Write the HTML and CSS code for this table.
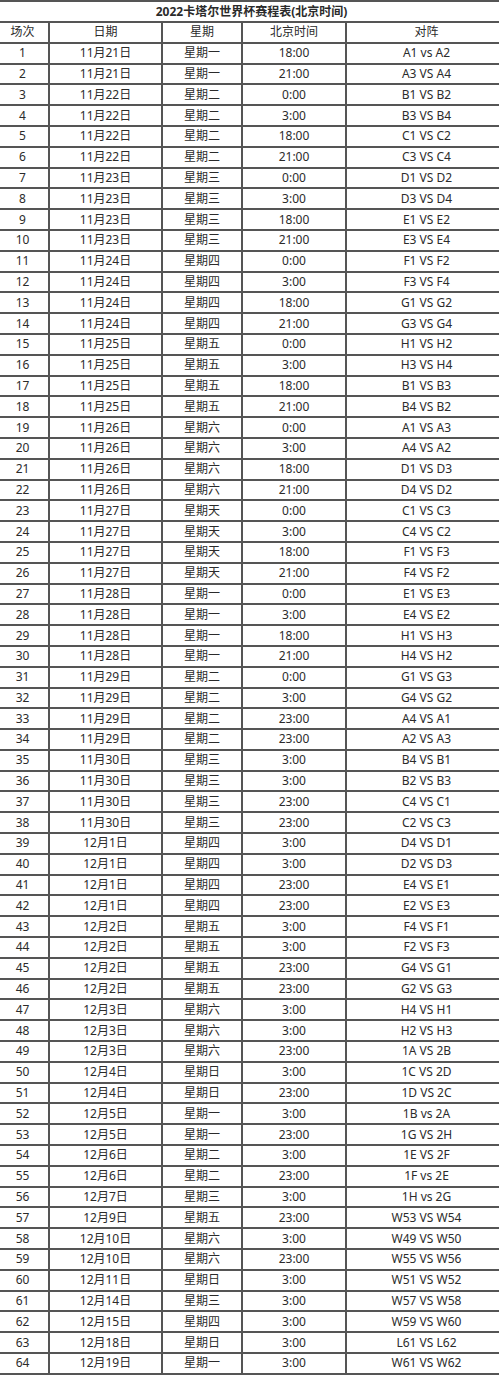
FILE: index.html
```html
<!DOCTYPE html>
<html lang="zh-CN">
<head>
<meta charset="utf-8">
<title>2022卡塔尔世界杯赛程表(北京时间)</title>
<link rel="stylesheet" href="styles.css">
</head>
<body>
<div class="wrap">
<table class="sched">
<colgroup>
<col class="c1"><col class="c2"><col class="c3"><col class="c4"><col class="c5">
</colgroup>
<tbody>
<tr class="title"><td colspan="5">2022卡塔尔世界杯赛程表(北京时间)</td></tr>
<tr><td>场次</td><td>日期</td><td>星期</td><td>北京时间</td><td>对阵</td></tr>
<tr><td>1</td><td>11月21日</td><td>星期一</td><td>18:00</td><td>A1 vs A2</td></tr>
<tr><td>2</td><td>11月21日</td><td>星期一</td><td>21:00</td><td>A3 VS A4</td></tr>
<tr><td>3</td><td>11月22日</td><td>星期二</td><td>0:00</td><td>B1 VS B2</td></tr>
<tr><td>4</td><td>11月22日</td><td>星期二</td><td>3:00</td><td>B3 VS B4</td></tr>
<tr><td>5</td><td>11月22日</td><td>星期二</td><td>18:00</td><td>C1 VS C2</td></tr>
<tr><td>6</td><td>11月22日</td><td>星期二</td><td>21:00</td><td>C3 VS C4</td></tr>
<tr><td>7</td><td>11月23日</td><td>星期三</td><td>0:00</td><td>D1 VS D2</td></tr>
<tr><td>8</td><td>11月23日</td><td>星期三</td><td>3:00</td><td>D3 VS D4</td></tr>
<tr><td>9</td><td>11月23日</td><td>星期三</td><td>18:00</td><td>E1 VS E2</td></tr>
<tr><td>10</td><td>11月23日</td><td>星期三</td><td>21:00</td><td>E3 VS E4</td></tr>
<tr><td>11</td><td>11月24日</td><td>星期四</td><td>0:00</td><td>F1 VS F2</td></tr>
<tr><td>12</td><td>11月24日</td><td>星期四</td><td>3:00</td><td>F3 VS F4</td></tr>
<tr><td>13</td><td>11月24日</td><td>星期四</td><td>18:00</td><td>G1 VS G2</td></tr>
<tr><td>14</td><td>11月24日</td><td>星期四</td><td>21:00</td><td>G3 VS G4</td></tr>
<tr><td>15</td><td>11月25日</td><td>星期五</td><td>0:00</td><td>H1 VS H2</td></tr>
<tr><td>16</td><td>11月25日</td><td>星期五</td><td>3:00</td><td>H3 VS H4</td></tr>
<tr><td>17</td><td>11月25日</td><td>星期五</td><td>18:00</td><td>B1 VS B3</td></tr>
<tr><td>18</td><td>11月25日</td><td>星期五</td><td>21:00</td><td>B4 VS B2</td></tr>
<tr><td>19</td><td>11月26日</td><td>星期六</td><td>0:00</td><td>A1 VS A3</td></tr>
<tr><td>20</td><td>11月26日</td><td>星期六</td><td>3:00</td><td>A4 VS A2</td></tr>
<tr><td>21</td><td>11月26日</td><td>星期六</td><td>18:00</td><td>D1 VS D3</td></tr>
<tr><td>22</td><td>11月26日</td><td>星期六</td><td>21:00</td><td>D4 VS D2</td></tr>
<tr><td>23</td><td>11月27日</td><td>星期天</td><td>0:00</td><td>C1 VS C3</td></tr>
<tr><td>24</td><td>11月27日</td><td>星期天</td><td>3:00</td><td>C4 VS C2</td></tr>
<tr><td>25</td><td>11月27日</td><td>星期天</td><td>18:00</td><td>F1 VS F3</td></tr>
<tr><td>26</td><td>11月27日</td><td>星期天</td><td>21:00</td><td>F4 VS F2</td></tr>
<tr><td>27</td><td>11月28日</td><td>星期一</td><td>0:00</td><td>E1 VS E3</td></tr>
<tr><td>28</td><td>11月28日</td><td>星期一</td><td>3:00</td><td>E4 VS E2</td></tr>
<tr><td>29</td><td>11月28日</td><td>星期一</td><td>18:00</td><td>H1 VS H3</td></tr>
<tr><td>30</td><td>11月28日</td><td>星期一</td><td>21:00</td><td>H4 VS H2</td></tr>
<tr><td>31</td><td>11月29日</td><td>星期二</td><td>0:00</td><td>G1 VS G3</td></tr>
<tr><td>32</td><td>11月29日</td><td>星期二</td><td>3:00</td><td>G4 VS G2</td></tr>
<tr><td>33</td><td>11月29日</td><td>星期二</td><td>23:00</td><td>A4 VS A1</td></tr>
<tr><td>34</td><td>11月29日</td><td>星期二</td><td>23:00</td><td>A2 VS A3</td></tr>
<tr><td>35</td><td>11月30日</td><td>星期三</td><td>3:00</td><td>B4 VS B1</td></tr>
<tr><td>36</td><td>11月30日</td><td>星期三</td><td>3:00</td><td>B2 VS B3</td></tr>
<tr><td>37</td><td>11月30日</td><td>星期三</td><td>23:00</td><td>C4 VS C1</td></tr>
<tr><td>38</td><td>11月30日</td><td>星期三</td><td>23:00</td><td>C2 VS C3</td></tr>
<tr><td>39</td><td>12月1日</td><td>星期四</td><td>3:00</td><td>D4 VS D1</td></tr>
<tr><td>40</td><td>12月1日</td><td>星期四</td><td>3:00</td><td>D2 VS D3</td></tr>
<tr><td>41</td><td>12月1日</td><td>星期四</td><td>23:00</td><td>E4 VS E1</td></tr>
<tr><td>42</td><td>12月1日</td><td>星期四</td><td>23:00</td><td>E2 VS E3</td></tr>
<tr><td>43</td><td>12月2日</td><td>星期五</td><td>3:00</td><td>F4 VS F1</td></tr>
<tr><td>44</td><td>12月2日</td><td>星期五</td><td>3:00</td><td>F2 VS F3</td></tr>
<tr><td>45</td><td>12月2日</td><td>星期五</td><td>23:00</td><td>G4 VS G1</td></tr>
<tr><td>46</td><td>12月2日</td><td>星期五</td><td>23:00</td><td>G2 VS G3</td></tr>
<tr><td>47</td><td>12月3日</td><td>星期六</td><td>3:00</td><td>H4 VS H1</td></tr>
<tr><td>48</td><td>12月3日</td><td>星期六</td><td>3:00</td><td>H2 VS H3</td></tr>
<tr><td>49</td><td>12月3日</td><td>星期六</td><td>23:00</td><td>1A VS 2B</td></tr>
<tr><td>50</td><td>12月4日</td><td>星期日</td><td>3:00</td><td>1C VS 2D</td></tr>
<tr><td>51</td><td>12月4日</td><td>星期日</td><td>23:00</td><td>1D VS 2C</td></tr>
<tr><td>52</td><td>12月5日</td><td>星期一</td><td>3:00</td><td>1B vs 2A</td></tr>
<tr><td>53</td><td>12月5日</td><td>星期一</td><td>23:00</td><td>1G VS 2H</td></tr>
<tr><td>54</td><td>12月6日</td><td>星期二</td><td>3:00</td><td>1E VS 2F</td></tr>
<tr><td>55</td><td>12月6日</td><td>星期二</td><td>23:00</td><td>1F vs 2E</td></tr>
<tr><td>56</td><td>12月7日</td><td>星期三</td><td>3:00</td><td>1H vs 2G</td></tr>
<tr><td>57</td><td>12月9日</td><td>星期五</td><td>23:00</td><td>W53 VS W54</td></tr>
<tr><td>58</td><td>12月10日</td><td>星期六</td><td>3:00</td><td>W49 VS W50</td></tr>
<tr><td>59</td><td>12月10日</td><td>星期六</td><td>23:00</td><td>W55 VS W56</td></tr>
<tr><td>60</td><td>12月11日</td><td>星期日</td><td>3:00</td><td>W51 VS W52</td></tr>
<tr><td>61</td><td>12月14日</td><td>星期三</td><td>3:00</td><td>W57 VS W58</td></tr>
<tr><td>62</td><td>12月15日</td><td>星期四</td><td>3:00</td><td>W59 VS W60</td></tr>
<tr><td>63</td><td>12月18日</td><td>星期日</td><td>3:00</td><td>L61 VS L62</td></tr>
<tr><td>64</td><td>12月19日</td><td>星期一</td><td>3:00</td><td>W61 VS W62</td></tr>
</tbody>
</table>
</div>
</body>
</html>
```
FILE: styles.css
```css
html, body {
  margin: 0;
  padding: 0;
  background: #fff;
  overflow: hidden;
}
.wrap {
  width: 499px;
  overflow: hidden;
  padding-top: 0;
}
.sched {
  margin-left: -5px;
  width: 511px;
  table-layout: fixed;
  border-collapse: collapse;
  font-family: "Noto Sans", "Noto Sans CJK SC", sans-serif;
  font-size: 12px;
  color: #2b2b2b;
}
.c1 { width: 53px; }
.c2 { width: 113px; }
.c3 { width: 80px; }
.c4 { width: 104px; }
.c5 { width: 161px; }
.sched td {
  border: 2px solid #555;
  padding: 0;
  text-align: center;
  vertical-align: middle;
  line-height: 14px;
}
.sched tr {
  height: 20.8px;
}
.sched tr.title {
  height: 21px;
}
.sched tr.title td {
  font-weight: bold;
}
```
